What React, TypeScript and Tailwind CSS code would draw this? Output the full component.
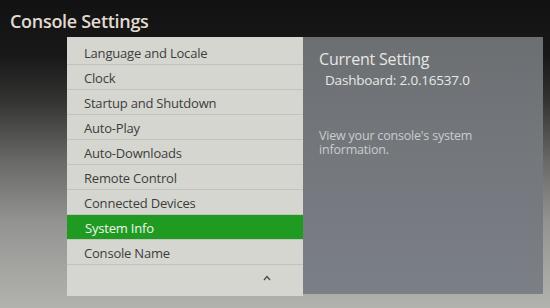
import React from "react";

const items = [
  "Language and Locale",
  "Clock",
  "Startup and Shutdown",
  "Auto-Play",
  "Auto-Downloads",
  "Remote Control",
  "Connected Devices",
  "System Info",
  "Console Name",
];

export default function App() {
  return (
    <div
      className="w-[550px] h-[308px] overflow-hidden flex flex-col bg-[linear-gradient(180deg,#121212_0%,#181818_18%,#343433_33%,#686866_52%,#939391_72%,#b2b2ae_100%)]"
      style={{ fontFamily: '"Open Sans", "Noto Sans", sans-serif' }}
    >
      <div className="h-[37px] pl-[10px] pt-[10px] text-[18px] font-semibold leading-[22px] tracking-[-0.3px] text-[#e0dbd1]">
        Console Settings
      </div>
      <div className="flex ml-[67px] h-[259px]">
        <div className="w-[236px] bg-[#d6d6d1] pt-[3px] flex flex-col">
          {items.map((t) => {
            const sel = t === "System Info";
            return (
              <div
                key={t}
                className={
                  sel
                    ? "h-[25px] flex items-center pl-[18px] pt-[3px] bg-[#1f9b22] text-[#f2f5ee] text-[13px] tracking-[-0.2px] border-b border-[#c4c4bf]"
                    : "h-[25px] flex items-center pl-[17px] pt-[3px] text-[#3d3d3b] text-[13px] tracking-[-0.2px] border-b border-[#c2c2bd]"
                }
              >
                {t}
              </div>
            );
          })}
          <div className="flex-1 flex items-start pl-[196px] pt-[10px] text-[#444] text-[12px]">
            <svg width="8" height="6" viewBox="0 0 8 6">
              <path d="M1 5 L4 1.5 L7 5" fill="none" stroke="#4a4a48" strokeWidth="1.3" />
            </svg>
          </div>
        </div>
        <div className="w-[240px] h-[257px] bg-[linear-gradient(180deg,#6b6f72_0%,#73777c_40%,#7b7f86_100%)] pl-[16px] pt-[12px] flex flex-col">
          <div className="text-[16px] leading-[20px] font-medium text-[#e6e6e4] tracking-[-0.2px]">
            Current Setting
          </div>
          <div className="pl-[6px] mt-[2px] text-[13.5px] leading-[18px] text-[#e8e8e6] tracking-[-0.2px]">
            Dashboard: 2.0.16537.0
          </div>
          <div className="mt-[40px] text-[12.5px] leading-[14px] text-[#c9ccd0] w-[190px] tracking-[-0.2px]">
            View your console's system information.
          </div>
        </div>
      </div>
    </div>
  );
}
